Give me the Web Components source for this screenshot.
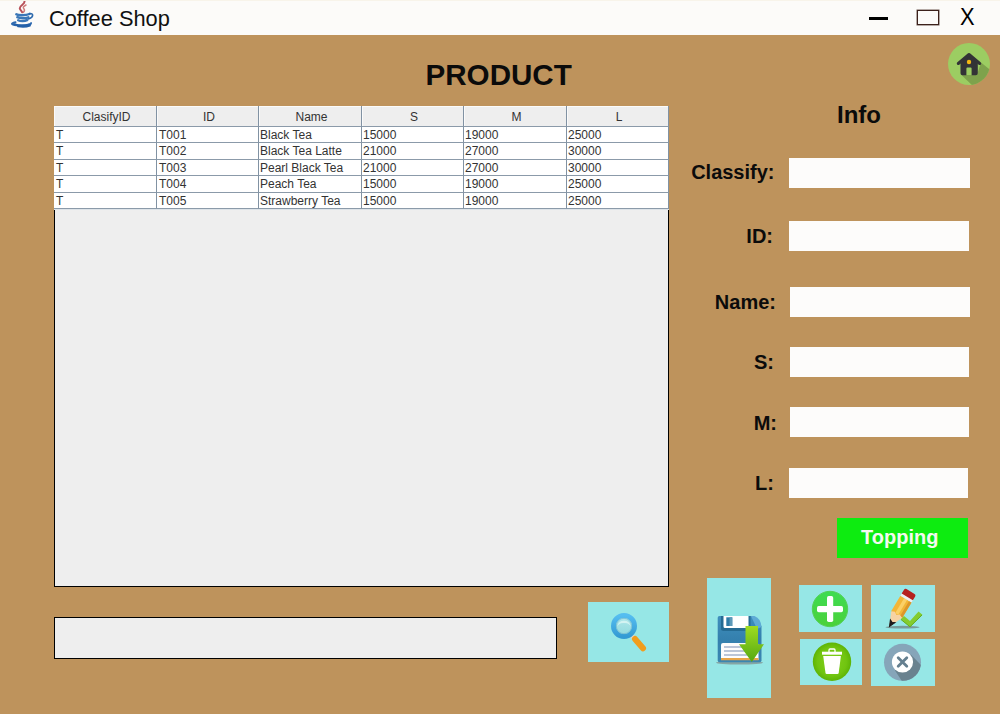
<!DOCTYPE html>
<html lang="en">
<head>
<meta charset="utf-8">
<title>Coffee Shop</title>
<style>
html,body{margin:0;height:100%;overflow:hidden}
body{font-family:"Liberation Sans",Arial,sans-serif;color:#0b0b0b;background:#be935c}
</style>
</head>
<body>
<coffee-app></coffee-app>
<script>
function define(name, html, setup) {
  const template = document.createElement('template');
  template.innerHTML = html;
  customElements.define(name, class extends HTMLElement {
    constructor() {
      super();
      this.attachShadow({mode: 'open'}).appendChild(template.content.cloneNode(true));
    }
    connectedCallback() { if (setup) setup(this, this.shadowRoot); }
  });
}

define('title-bar', `
<style>
:host{display:flex;height:35px;box-sizing:border-box;background:#fcfbf9;border-top:1px solid #f8f4ea;align-items:flex-start}
.java{margin-left:10px;width:26px;height:28px}
.name{flex:1;padding-left:13px;font-size:21.8px;line-height:35px;color:#111}
.min{margin:16px 29px 0 0;width:19px;height:3px;background:#000}
.max{margin:9px 21px 0 0;width:22px;height:15px;box-sizing:border-box;border:1px solid #3c211b;box-shadow:0 0 0 .5px #6d5650}
.close{width:40px;font-size:23.500px;line-height:33px;color:#000}
.close span{display:inline-block;transform:scaleX(.93);transform-origin:0 0}
</style>
<svg class="java" viewBox="0 0 26 28">
  <g fill="none" stroke-linecap="round">
    <path d="M14.500 0.300c.6 3-5 4.200-4.700 7 .2 1.700 1.800 2.400 2.400 4" stroke="#b9525a" stroke-width="2"/>
    <path d="M16 4c-2.800 1.400-3.400 2.500-2 3.900 .9 1 .6 2-.6 3.400" stroke="#cf7d7c" stroke-width="1.500"/>
    <path d="M6.300 13.200c2 1.500 9.500 1.400 13.200-.2M7.300 16.300c2.500 1.300 8 1.200 11 0M8.200 19.200c2 1 6.500 1 9 0" stroke="#3b77b8" stroke-width="2.400"/>
    <path d="M19.500 12.700c4.200-1 4.400 3.800-1.200 5.200" stroke="#2f6bae" stroke-width="1.700"/>
    <path d="M5.500 21.300c-6 1.300-4 2.800 4 3.200 7 .3 12-.8 11.500-2.400" stroke="#2d69b0" stroke-width="2"/>
    <path d="M4.500 23.200c4 1.500 10 1.500 15 .2M8 25.400c4 .7 9 .4 12-.8" stroke="#2460a8" stroke-width="1.800"/>
  </g>
</svg>
<div class="name"><slot></slot></div>
<div class="min"></div><div class="max"></div><div class="close"><span>X</span></div>
`);

define('home-button', `
<style>:host{display:block;width:42px;height:42px}svg{display:block}</style>
<svg width="42" height="42" viewBox="0 0 42 42">
  <defs><clipPath id="c"><circle cx="21" cy="21" r="21"/></clipPath></defs>
  <circle cx="21" cy="21" r="21" fill="#9ccd62"/>
  <path clip-path="url(#c)" d="M13.500 32L27 45H46V30L33 19.500L29 32z" fill="#7ea24c"/>
  <path d="M12.500 20L21 12l8.800 8v10.300a2 2 0 0 1-2 2h-4.200v-6.800a1 1 0 0 0-1-1h-3.200a1 1 0 0 0-1 1v6.800H14.500a2 2 0 0 1-2-2z" fill="#333336"/>
  <path d="M10.300 20.500L21 11.500l10.700 9" fill="none" stroke="#333336" stroke-width="3" stroke-linecap="round" stroke-linejoin="round"/>
  <circle cx="21" cy="19" r="2.200" fill="#f5b812"/>
</svg>
`);

define('product-table', `
<style>
:host{display:flex;flex-direction:column;height:481px}
.grid{display:grid;grid-template-columns:103px 102px 103px 102px 103px 102px;font-size:12px;color:#333;border-bottom:1px solid #dde3e8}
.grid>div{box-sizing:border-box;border-right:1px solid #8192a3;border-bottom:1px solid #8b9aa9;padding-left:2px;background:#fff;white-space:nowrap;overflow:hidden}
.grid>.n{padding-left:1px}
.grid>.d{padding-left:1px}
.grid>.h{height:21px;line-height:23px;text-align:center;background:#eee;padding-left:3px;box-shadow:inset 1px 1px #fafafa}
.rest{flex:1;border:solid #000;border-width:0 1px 1px;background:#eee}
</style>
<div class="grid"></div><div class="rest"></div>
`, (host, root) => {
  const grid = root.querySelector('.grid');
  const cell = (text, cls, height) => {
    const d = document.createElement('div');
    d.className = cls; d.textContent = text;
    if (height) { d.style.height = height + 'px'; d.style.lineHeight = '16px'; }
    grid.appendChild(d);
  };
  ['ClasifyID', 'ID', 'Name', 'S', 'M', 'L'].forEach(t => cell(t, 'h'));
  const rows = [
    ['T', 'T001', 'Black Tea', '15000', '19000', '25000'],
    ['T', 'T002', 'Black Tea Latte', '21000', '27000', '30000'],
    ['T', 'T003', 'Pearl Black Tea', '21000', '27000', '30000'],
    ['T', 'T004', 'Peach Tea', '15000', '19000', '25000'],
    ['T', 'T005', 'Strawberry Tea', '15000', '19000', '25000']
  ];
  const heights = [16, 17, 16, 17, 16];
  rows.forEach((r, i) => r.forEach((t, j) => cell(t, j > 2 ? 'd' : j === 2 ? 'n' : '', heights[i])));
});

define('form-field', `
<style>
:host{display:flex;height:30px}
label{box-sizing:border-box;width:var(--x,99px);padding-right:var(--gap,16px);text-align:right;font-weight:bold;font-size:20px;line-height:var(--line,30px);white-space:nowrap}
.box{width:var(--w,180px);height:30px;background:#fdfcfb}
</style>
<label><slot></slot></label><div class="box"></div>
`);

define('icon-button', `
<style>:host{display:flex;background:#96e7e6}::slotted(svg){display:block}</style>
<slot></slot>
`);

define('topping-button', `
<style>:host{display:block;width:131px;height:40px;background:#0dec10;color:#f4faf0;font-weight:bold;font-size:20px;line-height:39px;padding-left:24px;box-sizing:border-box}</style>
<slot></slot>
`);

define('coffee-app', `
<style>
:host{display:block;width:1000px;height:714px;background:#be935c}
header{display:grid;grid-template-columns:425.500px 1fr 42px;padding-right:10px;height:60px}
h1{margin:20px 0 0;font-size:29.600px;line-height:40px}
home-button{margin-top:8px}
main{display:flex;gap:21px}
.left{margin-left:54px;width:615px;padding-top:11px}
.search{display:flex;justify-content:space-between;margin-top:15px}
.input{margin-top:15px;width:503px;height:42px;box-sizing:border-box;border:1px solid #000;background:#eee}
.right{width:310px}
h2{margin:0 0 23px;padding-left:147px;font-size:24px;line-height:40px}
topping-button{margin:20px 0 20px 147px}
.actions{display:flex;padding-left:17px;gap:28px}
.pad{display:grid;grid-template-columns:63px 64px;grid-template-rows:47px 47px;gap:7px 9px;margin-top:7px}
</style>
<title-bar>Coffee Shop</title-bar>
<header><span></span><h1>PRODUCT</h1><home-button></home-button></header>
<main>
  <div class="left">
    <product-table></product-table>
    <div class="search">
      <div class="input"></div>
      <icon-button style="width:81px;height:60px">
        <svg width="81" height="60" viewBox="0 0 81 60">
          <defs>
            <linearGradient id="ring" x2="0" y2="1"><stop stop-color="#55bdf0"/><stop offset="1" stop-color="#349bd4"/></linearGradient>
            <linearGradient id="glass" x2="0" y2="1"><stop stop-color="#b5e9ec"/><stop offset="1" stop-color="#8fd9dc"/></linearGradient>
          </defs>
          <path d="M43.500 33.500l3.500 4" stroke="#e8d3c4" stroke-width="4"/>
          <path d="M47 37l8 9.200" stroke="#f19d1d" stroke-width="6" stroke-linecap="round"/>
          <circle cx="36" cy="24" r="10.500" fill="url(#glass)" stroke="url(#ring)" stroke-width="5"/>
          <circle cx="36" cy="24" r="7.700" fill="none" stroke="#79bcd0" stroke-width=".8"/>
          <path d="M29.300 24.500a6.800 6.800 0 0 1 13.400 0q-1.500-4-6.700-3.500-5.200-.5-6.700 3.500z" fill="#d3f3f2"/>
        </svg>
      </icon-button>
    </div>
  </div>
  <div class="right">
    <h2>Info</h2>
    <form-field style="--w:181px;--gap:14.500px;--line:28px">Classify:</form-field>
    <form-field style="margin-top:33px;--gap:16px">ID:</form-field>
    <form-field style="margin-top:36px;--x:100px;--gap:14px">Name:</form-field>
    <form-field style="margin-top:30px;--x:100px;--w:179px;--gap:16px">S:</form-field>
    <form-field style="margin-top:30px;--x:100px;--w:179px;--gap:13px;--line:32px">M:</form-field>
    <form-field style="margin-top:31px;--w:179px;--gap:15px">L:</form-field>
    <topping-button>Topping</topping-button>
    <div class="actions">
      <icon-button style="width:64px;height:120px">
        <svg width="64" height="120" viewBox="0 0 64 120">
          <defs>
            <linearGradient id="disk" x2="0" y2="1"><stop stop-color="#3f8fbd"/><stop offset=".5" stop-color="#3480ae"/><stop offset="1" stop-color="#3b86b1"/></linearGradient>
            <linearGradient id="arrow" x2="0" y2="1"><stop stop-color="#9fdc20"/><stop offset="1" stop-color="#55a812"/></linearGradient>
          </defs>
          <ellipse cx="32.500" cy="84.800" rx="23.500" ry="1.800" fill="#85a6a5"/>
          <path d="M12.500 38H45L54.500 48V82.500a1.800 1.800 0 0 1-1.800 1.800H12.500a1.800 1.800 0 0 1-1.800-1.800V39.800A1.800 1.800 0 0 1 12.500 38z" fill="url(#disk)"/>
          <path d="M44 38h3.500q6.500 2.500 7 11L50 51z" fill="#5eabd5"/>
          <path d="M14 38v12.500a2.500 2.500 0 0 0 2.500 2.500h24.500a2.500 2.500 0 0 0 2.500-2.500V38z" fill="#256b93"/>
          <path d="M16.500 38h25v10.500a1.500 1.500 0 0 1-1.500 1.500H18a1.500 1.500 0 0 1-1.500-1.500z" fill="#fff"/>
          <path d="M19.300 39.300h6v8.700h-6z" fill="#2f7ba6"/><path d="M22.500 39.300h2.800v8.700h-2.800z" fill="#5d99b8"/>
          <path d="M14 67a2 2 0 0 1 2-2h33.500a2 2 0 0 1 2 2v15H14z" fill="#fcfcfc"/>
          <path d="M14 80h37.500v2.200H14z" fill="#e7a548"/>
          <path d="M17 69h23M17 73h23M17 77h23" stroke="#a4b2ca" stroke-width="1.500"/>
          <path d="M38.500 48h12.500v18.200h6L44.800 84 32 66.200h6.500z" fill="url(#arrow)"/>
        </svg>
      </icon-button>
      <div class="pad">
        <icon-button>
          <svg width="63" height="47" viewBox="0 0 63 47">
            <defs><linearGradient id="add" x2="0" y2="1"><stop stop-color="#3ddc52"/><stop offset="1" stop-color="#4bd13a"/></linearGradient></defs>
            <circle cx="31" cy="24" r="17.700" fill="url(#add)" stroke="#55d058" stroke-width="1"/>
            <rect x="28" y="11" width="6.200" height="26" rx="1.700" fill="#fff"/>
            <rect x="18" y="21" width="26" height="6.200" rx="1.700" fill="#fff"/>
          </svg>
        </icon-button>
        <icon-button>
          <svg width="64" height="47" viewBox="0 0 64 47">
            <ellipse cx="31.500" cy="42.200" rx="17" ry="1.400" fill="#789b99"/>
            <path d="M29.500 34l3.500-3 6 5 8.500-9.500 4 3.300L39 42z" fill="#84cc2e"/>
            <path d="M30 34.500L39 41.800 51 30" fill="none" stroke="#62ae1d" stroke-width="1"/>
            <g transform="translate(18.500 41.500) rotate(31)">
              <path d="M0 0L-6-13V-29H6V-13z" fill="#f6d3a4"/>
              <path d="M-6.500-14V-32H6.500V-14L2.500-15.500 0-13.500-3-15.500z" fill="#f2b637"/>
              <path d="M-2-32h3.500v17.500h-3.500z" fill="#fbd067"/><path d="M3.700-32h2.800v18l-2.800-1z" fill="#dc962b"/>
              <path d="M0 0L-2.700-6.200 0-5 2.700-6.200z" fill="#1c1b1b" stroke="#1c1b1b"/>
              <path d="M-6.500-35H6.500v3H-6.500z" fill="#eeeef0"/>
              <path d="M-6.500-39q0-1.800 1.800-1.800H4.700q1.800 0 1.800 1.800v4.500H-6.500z" fill="#b5201f"/>
            </g>
          </svg>
        </icon-button>
        <icon-button style="margin:0 0 1px 1px">
          <svg width="62" height="46" viewBox="0 0 62 46">
            <defs><radialGradient id="bin"><stop stop-color="#83d21c"/><stop offset=".75" stop-color="#70c410"/><stop offset="1" stop-color="#5eb406"/></radialGradient></defs>
            <circle cx="32" cy="22.700" r="19.200" fill="url(#bin)"/>
            <path d="M29 13v-2q0-1 1-1h4q1 0 1 1v2" fill="none" stroke="#fff" stroke-width="1.300"/>
            <path d="M22 12.700h20v3H22z" fill="#fff"/>
            <path d="M23.200 17h17.700L38.700 34q-.2 1-1.200 1H26.700q-1 0-1.200-1z" fill="#fff"/>
          </svg>
        </icon-button>
        <icon-button>
          <svg width="64" height="47" viewBox="0 0 64 47">
            <defs><clipPath id="cc"><circle cx="31.500" cy="23.300" r="18.500"/></clipPath></defs>
            <circle cx="31.500" cy="23.300" r="18.500" fill="#86a5b9"/>
            <path clip-path="url(#cc)" d="M39.500 15.300L60 36V50H36L24 31.500z" fill="#69828f"/>
            <circle cx="31.500" cy="23" r="10.600" fill="#fff"/>
            <path d="M27.200 18.700l8.600 8.600M35.800 18.700l-8.600 8.600" stroke="#647f8f" stroke-width="2.800" stroke-linecap="round"/>
          </svg>
        </icon-button>
      </div>
    </div>
  </div>
</main>
`);
</script>
</body>
</html>
